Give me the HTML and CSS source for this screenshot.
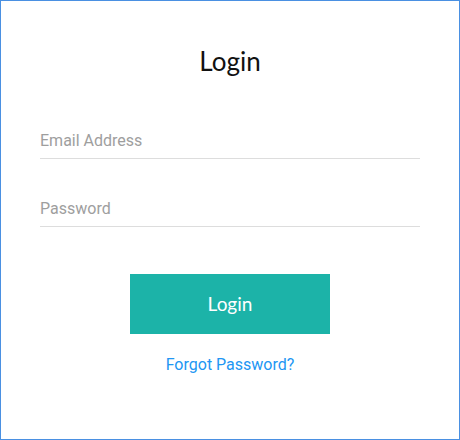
FILE: index.html
```html
<!DOCTYPE html>
<html>
<head>
    <title>Login</title>
    <link rel="stylesheet" href="styles.css">
</head>
<body>
    <div class="frame">
        <h2 class="title">Login</h2>
        <form class="login-form">
            <input type="email" class="field" placeholder="Email Address">
            <input type="password" class="field" placeholder="Password">
            <button type="submit" class="login-btn">Login</button>
            <a href="#" class="forgot">Forgot Password?</a>
        </form>
    </div>
</body>
</html>
```

FILE: styles.css
```css
body {
    margin: 0;
    padding: 0;
    background-color: #fff;
}

.frame {
    width: 460px;
    height: 440px;
    box-sizing: border-box;
    border: 1px solid #4a90e2;
    padding: 40px 39px 0;
}

.title {
    margin: 0;
    font-family: Lato, sans-serif;
    font-weight: 400;
    font-size: 26px;
    line-height: 40px;
    color: #111;
    text-align: center;
}

.login-form {
    display: flex;
    flex-direction: column;
    align-items: center;
    margin-top: 38px;
}

.field {
    width: 100%;
    box-sizing: border-box;
    height: 40px;
    padding: 4px 0 0;
    border: none;
    border-bottom: 1px solid #ddd;
    font-family: Roboto, sans-serif;
    font-size: 16px;
    color: #333;
    outline: none;
}

.field + .field {
    margin-top: 28px;
}

.field::placeholder {
    color: #9e9e9e;
}

.login-btn {
    margin-top: 47px;
    width: 200px;
    height: 60px;
    padding: 0 0 2px;
    border: none;
    background-color: #1cb3a8;
    color: #fff;
    font-family: Lato, sans-serif;
    font-size: 19px;
    cursor: pointer;
}

.forgot {
    margin-top: 21px;
    font-family: Roboto, sans-serif;
    font-size: 16px;
    color: #2196f3;
    text-decoration: none;
}
```
